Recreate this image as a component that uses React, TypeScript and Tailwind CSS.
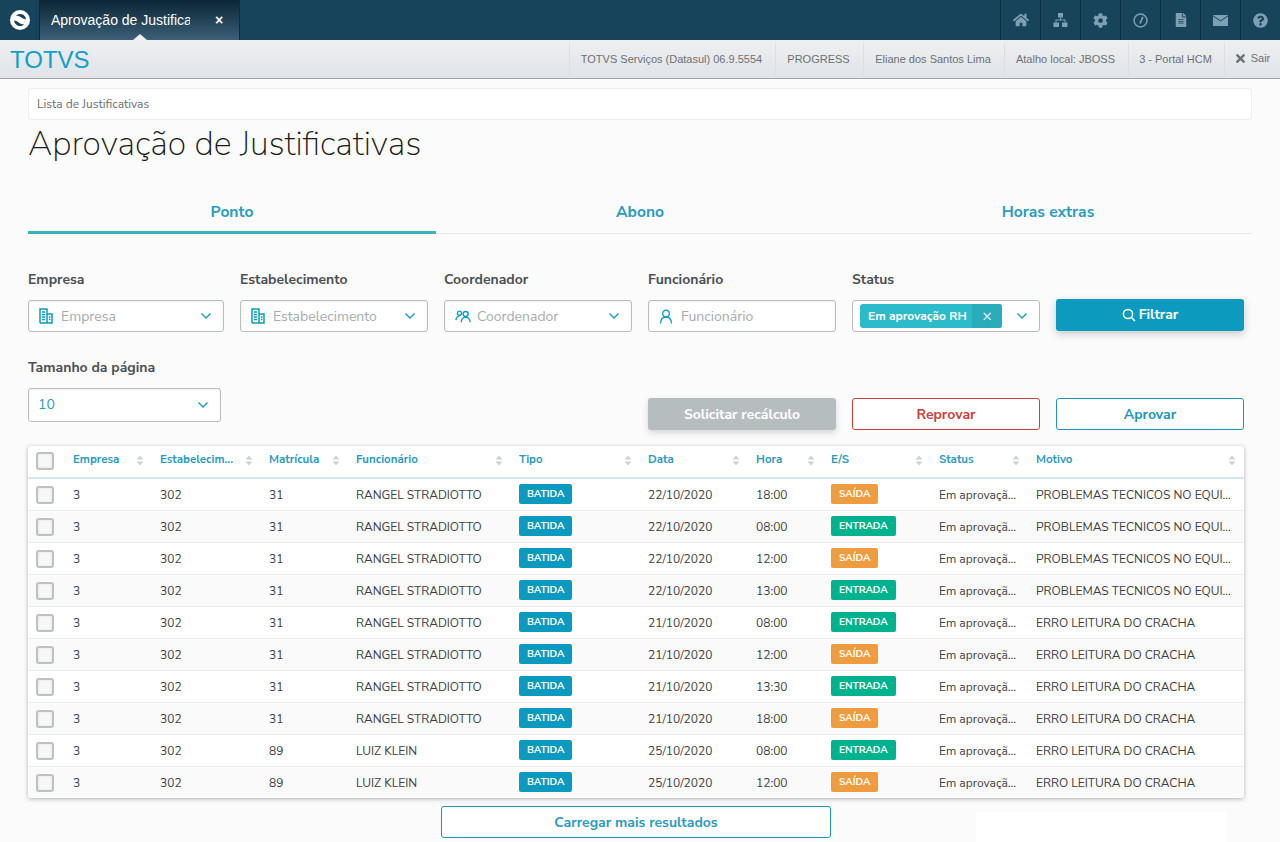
import React from "react";
import { FaHome, FaCog, FaFileAlt, FaQuestionCircle, FaTimes } from "react-icons/fa";

const font = "font-['Nunito_Sans','Lato','Noto_Sans',sans-serif]";

const Logo = () => (
  <svg width="22" height="22" viewBox="0 0 22 22">
    <circle cx="11" cy="11" r="10" fill="#fff" />
    <g transform="matrix(-1 0 0 1 22 0)">
      <path d="M5 10.4 A6.1 6.1 0 0 1 15.2 6.6 C12.8 6.6 11.2 7.6 9.6 8.6 C8 9.6 6.5 10.3 5 10.4 Z" fill="#17445a" />
      <path d="M17 11.6 A6.1 6.1 0 0 1 6.8 15.4 C9.2 15.4 10.8 14.4 12.4 13.4 C14 12.4 15.5 11.7 17 11.6 Z" fill="#17445a" />
    </g>
  </svg>
);

const Clock = () => (
  <svg width="15" height="15" viewBox="0 0 16 16" fill="none" stroke="#7fa0b3" strokeWidth="1.6">
    <circle cx="8" cy="8" r="6.9" />
    <path d="M10.5 4.2 L7.5 11.2" strokeWidth="1.8" />
  </svg>
);

const Sitemap = () => (
  <svg width="15" height="14" viewBox="0 0 15 14" fill="#7fa0b3">
    <rect x="5" y="0" width="5" height="4.5" />
    <rect x="0.5" y="9.5" width="5.5" height="4.5" />
    <rect x="9" y="9.5" width="5.5" height="4.5" />
    <path d="M7 4.5 H8 V6.5 H12.5 V9.5 H11.5 V7.5 H3.5 V9.5 H2.5 V6.5 H7 Z" />
  </svg>
);

const Envelope = () => (
  <svg width="15" height="11" viewBox="0 0 15 11">
    <rect width="15" height="11" fill="#7fa0b3" />
    <path d="M0 0.8 L7.5 6 L15 0.8" fill="none" stroke="#17445a" strokeWidth="1" />
  </svg>
);

const Chevron = () => (
  <svg width="12" height="8" viewBox="0 0 12 8" fill="none" stroke="#0c9abe" strokeWidth="1.3" className="shrink-0">
    <path d="M1.5 1.5 L6 6 L10.5 1.5" />
  </svg>
);

const Building = () => (
  <svg width="14" height="16" viewBox="0 0 14 16" fill="none" stroke="#0c9abe" strokeWidth="1.5" className="shrink-0">
    <path d="M1 15 V1 H8 V15 M8 6 H13 V15 H1" />
    <path d="M3 4 H6 M3 6.5 H6 M3 9 H6 M3 11.5 H6 M10 9 H11.5 M10 11.5 H11.5" strokeWidth="1.3" />
  </svg>
);

const Users = () => (
  <svg width="16" height="13" viewBox="0 0 18 14" fill="none" stroke="#0c9abe" strokeWidth="1.5" className="shrink-0 -mr-[2px]">
    <circle cx="5" cy="3.3" r="2.3" />
    <path d="M1 11 C1.5 7.5 3 6.5 5 6.5" />
    <circle cx="12" cy="4.2" r="2.8" />
    <path d="M7 13.5 C7.2 9 9.5 8 12 8 C14.5 8 16.8 9 17 13.5" />
  </svg>
);

const User = () => (
  <svg width="14" height="15" viewBox="0 0 14 15" fill="none" stroke="#0c9abe" strokeWidth="1.3" className="shrink-0">
    <circle cx="7" cy="4.5" r="3.3" />
    <path d="M1.5 14.5 C1.7 10 4 8 7 8 C10 8 12.3 10 12.5 14.5" />
  </svg>
);

const Search = () => (
  <svg width="14" height="14" viewBox="0 0 14 14" fill="none" stroke="#fff" strokeWidth="1.5" className="shrink-0">
    <circle cx="6" cy="6" r="4.6" />
    <path d="M9.5 9.5 L13 13" />
  </svg>
);

const Sort = () => (
  <svg width="8" height="11" viewBox="0 0 8 11" fill="#cdd2d5" className="shrink-0">
    <path d="M4 0.5 L7.5 4.5 H0.5 Z M4 10.5 L7.5 6.5 H0.5 Z" />
  </svg>
);

const Check = () => (
  <div className="w-[18px] h-[18px] rounded-[3px] border-2 border-[#bcc1c3] bg-[#f7f7f7] shadow-[inset_0_0_3px_rgba(0,0,0,0.08)]" />
);

const topIcons = [
  <FaHome size={16} color="#7fa0b3" />,
  <Sitemap />,
  <FaCog size={15} color="#7fa0b3" />,
  <Clock />,
  <FaFileAlt size={14} color="#7fa0b3" />,
  <Envelope />,
  <FaQuestionCircle size={15} color="#7fa0b3" />,
];

const infoItems: [string, string][] = [
  ["TOTVS Serviços (Datasul) 06.9.5554", "w-[206px]"],
  ["PROGRESS", "w-[88px]"],
  ["Eliane dos Santos Lima", "w-[141px]"],
  ["Atalho local: JBOSS", "w-[124px]"],
  ["3 - Portal HCM", "w-[96px]"],
];

const cols = "grid grid-cols-[45px_87px_109px_87px_163px_129px_108px_75px_108px_97px_1fr]";
const headers = ["Empresa", "Estabelecim...", "Matrícula", "Funcionário", "Tipo", "Data", "Hora", "E/S", "Status", "Motivo"];

const PT = "PROBLEMAS TECNICOS NO EQUI...";
const EL = "ERRO LEITURA DO CRACHA";
const RS = "RANGEL STRADIOTTO";
const rows: [string, string, string, string, string, string][] = [
  ["31", RS, "22/10/2020", "18:00", "SAÍDA", PT],
  ["31", RS, "22/10/2020", "08:00", "ENTRADA", PT],
  ["31", RS, "22/10/2020", "12:00", "SAÍDA", PT],
  ["31", RS, "22/10/2020", "13:00", "ENTRADA", PT],
  ["31", RS, "21/10/2020", "08:00", "ENTRADA", EL],
  ["31", RS, "21/10/2020", "12:00", "SAÍDA", EL],
  ["31", RS, "21/10/2020", "13:30", "ENTRADA", EL],
  ["31", RS, "21/10/2020", "18:00", "SAÍDA", EL],
  ["89", "LUIZ KLEIN", "25/10/2020", "08:00", "ENTRADA", EL],
  ["89", "LUIZ KLEIN", "25/10/2020", "12:00", "SAÍDA", EL],
];

const Badge = ({ text, color }: { text: string; color: string }) => (
  <span className={`inline-flex h-5 items-center px-2 -mt-[1px] rounded-[2px] text-white text-[10px] font-bold leading-none align-top ${color}`}>{text}</span>
);

const Field = ({ label, width, icon, placeholder }: { label: string; width: string; icon: React.ReactNode; placeholder: string }) => (
  <div className={`${width} shrink-0`}>
    <div className="h-[21px] text-[14px] leading-[21px] font-bold text-[#4a5054]">{label}</div>
    <div className="mt-[10px] h-8 bg-white rounded-[3px] border border-[#b6bdc0] shadow-[inset_0_1px_3px_rgba(0,0,0,0.06)] flex items-center pl-[10px] pr-[11px] gap-2">
      {icon}
      <span className="flex-1 text-[14px] text-[#a5abae]">{placeholder}</span>
      {label !== "Funcionário" && <Chevron />}
    </div>
  </div>
);

export default function App() {
  return (
    <div className={`w-[1280px] h-[842px] overflow-hidden bg-[#fbfbfb] ${font}`}>
      {/* top bar */}
      <div className="h-10 flex bg-[#17445a] font-['Liberation_Sans',Arial,sans-serif]">
        <div className="w-10 flex items-center justify-center border-r border-[#0d2c3d]">
          <Logo />
        </div>
        <div className="relative w-[200px] flex items-center pl-[11px] bg-gradient-to-b from-[#0b2636] to-[#3c6077] border-r border-[#0d2c3d]">
          <span className="w-[139px] overflow-hidden whitespace-nowrap text-[14px] text-white">Aprovação de Justificativas</span>
          <span className="ml-[25px] text-[14px] leading-none font-bold text-white">×</span>
          <span className="absolute bottom-0 left-[93px] w-0 h-0 border-x-[7px] border-x-transparent border-b-[6px] border-b-[#eeeff0]" />
        </div>
        <div className="flex-1" />
        {topIcons.map((ic, i) => (
          <div key={i} className="w-10 flex items-center justify-center border-l border-[#0e2f41]">
            {ic}
          </div>
        ))}
      </div>
      {/* info bar */}
      <div className="h-[39px] flex bg-gradient-to-b from-[#eeeff0] to-[#e0e4e8] border-b border-[#a3a5a7] font-['Liberation_Sans',Arial,sans-serif]">
        <div className="flex-1 pl-[10px] pt-[5px] text-[24px] leading-[30px] text-[#109fcb]">TOTVS</div>
        {infoItems.map(([t, w]) => (
          <div key={t} className={`${w} flex items-center justify-center pr-[2px] text-[11px] text-[#6d7174] border-l border-[#dcdfe0] my-[3px]`}>
            {t}
          </div>
        ))}
        <div className="w-[56px] flex items-center justify-center gap-1 pb-[2px] pr-[1px] text-[11px] text-[#6d7174] border-l border-[#dcdfe0] my-[3px]">
          <FaTimes size={13} />
          Sair
        </div>
      </div>
      {/* content */}
      <div className="px-7">
        <div className="mt-[9px] h-8 bg-white border border-[#eeeeee] rounded-[3px] flex items-center px-2 text-[12px] text-[#6b7073]">
          Lista de Justificativas
        </div>
        <h1 className="mt-[2px] h-[44px] text-[34px] leading-[44px] font-extralight text-[#1a1a1a]">Aprovação de Justificativas</h1>
        {/* tabs */}
        <div className="mt-[25px] flex h-[43px] border-b border-[#e6e8ea] text-[15.6px] font-bold text-[#2b9bbd]">
          <div className="w-[408px] flex items-center justify-center border-b-[3px] border-[#38b1c2] h-[43px] pt-[3px]">Ponto</div>
          <div className="w-[408px] flex items-center justify-center pt-[1px]">Abono</div>
          <div className="w-[408px] flex items-center justify-center pt-[1px]">Horas extras</div>
        </div>
        {/* filters */}
        <div className="mt-[35px] flex gap-4">
          <Field label="Empresa" width="w-[196px]" icon={<Building />} placeholder="Empresa" />
          <Field label="Estabelecimento" width="w-[188px]" icon={<Building />} placeholder="Estabelecimento" />
          <Field label="Coordenador" width="w-[188px]" icon={<Users />} placeholder="Coordenador" />
          <Field label="Funcionário" width="w-[188px]" icon={<User />} placeholder="Funcionário" />
          <div className="w-[188px] shrink-0">
            <div className="h-[21px] text-[14px] leading-[21px] font-bold text-[#4a5054]">Status</div>
            <div className="mt-[10px] h-8 bg-white rounded-[3px] border border-[#b6bdc0] flex items-center pl-[7px] pr-[11px]">
              <div className="h-6 w-[142px] flex rounded-[3px] overflow-hidden bg-[#2cbcc9] text-white text-[12px] font-bold">
                <span className="flex-1 flex items-center pl-2 whitespace-nowrap">Em aprovação RH</span>
                <span className="w-[30px] flex items-center justify-center bg-[#29adb9] text-[16px] font-normal">×</span>
              </div>
              <span className="flex-1" />
              <Chevron />
            </div>
          </div>
          <button className="mt-[30px] w-[188px] h-8 shrink-0 rounded-[3px] bg-[#0c9abe] text-white text-[14px] font-bold flex items-center justify-center gap-[3px] pb-[1px] shadow-[0_3px_8px_rgba(0,0,0,0.2)]">
            <Search />
            Filtrar
          </button>
        </div>
        {/* page size + actions */}
        <div className="mt-[25px] flex">
          <div className="w-[193px] shrink-0">
            <div className="h-[21px] text-[14px] leading-[21px] font-bold text-[#4a5054]">Tamanho da página</div>
            <div className="mt-[10px] h-[34px] bg-white rounded-[3px] border border-[#b6bdc0] shadow-[inset_0_1px_3px_rgba(0,0,0,0.06)] flex items-center justify-between pl-[9px] pr-[11px] pb-[1px] text-[14px] text-[#2b9bbd]">
              10
              <Chevron />
            </div>
          </div>
          <div className="ml-[427px] mt-[41px] flex gap-4 text-[14px] font-bold">
            <button className="w-[188px] h-8 rounded-[3px] bg-[#b6bdbf] text-white shadow-[0_3px_6px_rgba(0,0,0,0.15)]">Solicitar recálculo</button>
            <button className="w-[188px] h-8 rounded-[3px] bg-white border border-[#c9403c] text-[#c9403c]">Reprovar</button>
            <button className="w-[188px] h-8 rounded-[3px] bg-white border border-[#1a96b8] text-[#1a96b8]">Aprovar</button>
          </div>
        </div>
        {/* table */}
        <div className="mt-4 w-[1216px] h-[352px] bg-white rounded-[3px] shadow-[0_1px_4px_rgba(0,0,0,0.3)] overflow-hidden">
          <div className={`${cols} h-[33px] border-b-2 border-[#cfe9f1] items-center`}>
            <div className="pl-2 -mt-[2px]"><Check /></div>
            {headers.map((h) => (
              <div key={h} className="flex items-center justify-between pr-[16px] last:pr-2 -mt-[3px] text-[11.5px] font-bold text-[#2b9bbd] whitespace-nowrap">
                {h}
                <Sort />
              </div>
            ))}
          </div>
          {rows.map((r, i) => (
            <div key={i} className={`${cols} h-8 items-center text-[12px] text-[#3c4043] border-b border-[#ebecec] last:border-b-0 ${i % 2 ? "bg-[#fafafa]" : "bg-white"}`}>
              <div className="pl-2"><Check /></div>
              <div>3</div>
              <div>302</div>
              <div>{r[0]}</div>
              <div className="whitespace-nowrap">{r[1]}</div>
              <div className="h-5 flex"><Badge text="BATIDA" color="bg-[#0c9abe]" /></div>
              <div>{r[2]}</div>
              <div>{r[3]}</div>
              <div className="h-5 flex">
                <Badge text={r[4]} color={r[4] === "SAÍDA" ? "bg-[#ed9c3f]" : "bg-[#00b28e]"} />
              </div>
              <div className="whitespace-nowrap">Em aprovaçã...</div>
              <div className="whitespace-nowrap">{r[5]}</div>
            </div>
          ))}
        </div>
        {/* load more */}
        <div className="flex">
          <button className="mt-2 ml-[413px] w-[390px] h-8 rounded-[3px] bg-white border border-[#1a96b8] text-[#2b9bbd] text-[14px] font-bold">
            Carregar mais resultados
          </button>
          <div className="ml-[145px] mt-[14px] w-[250px] h-[40px] bg-white" />
        </div>
      </div>
    </div>
  );
}
